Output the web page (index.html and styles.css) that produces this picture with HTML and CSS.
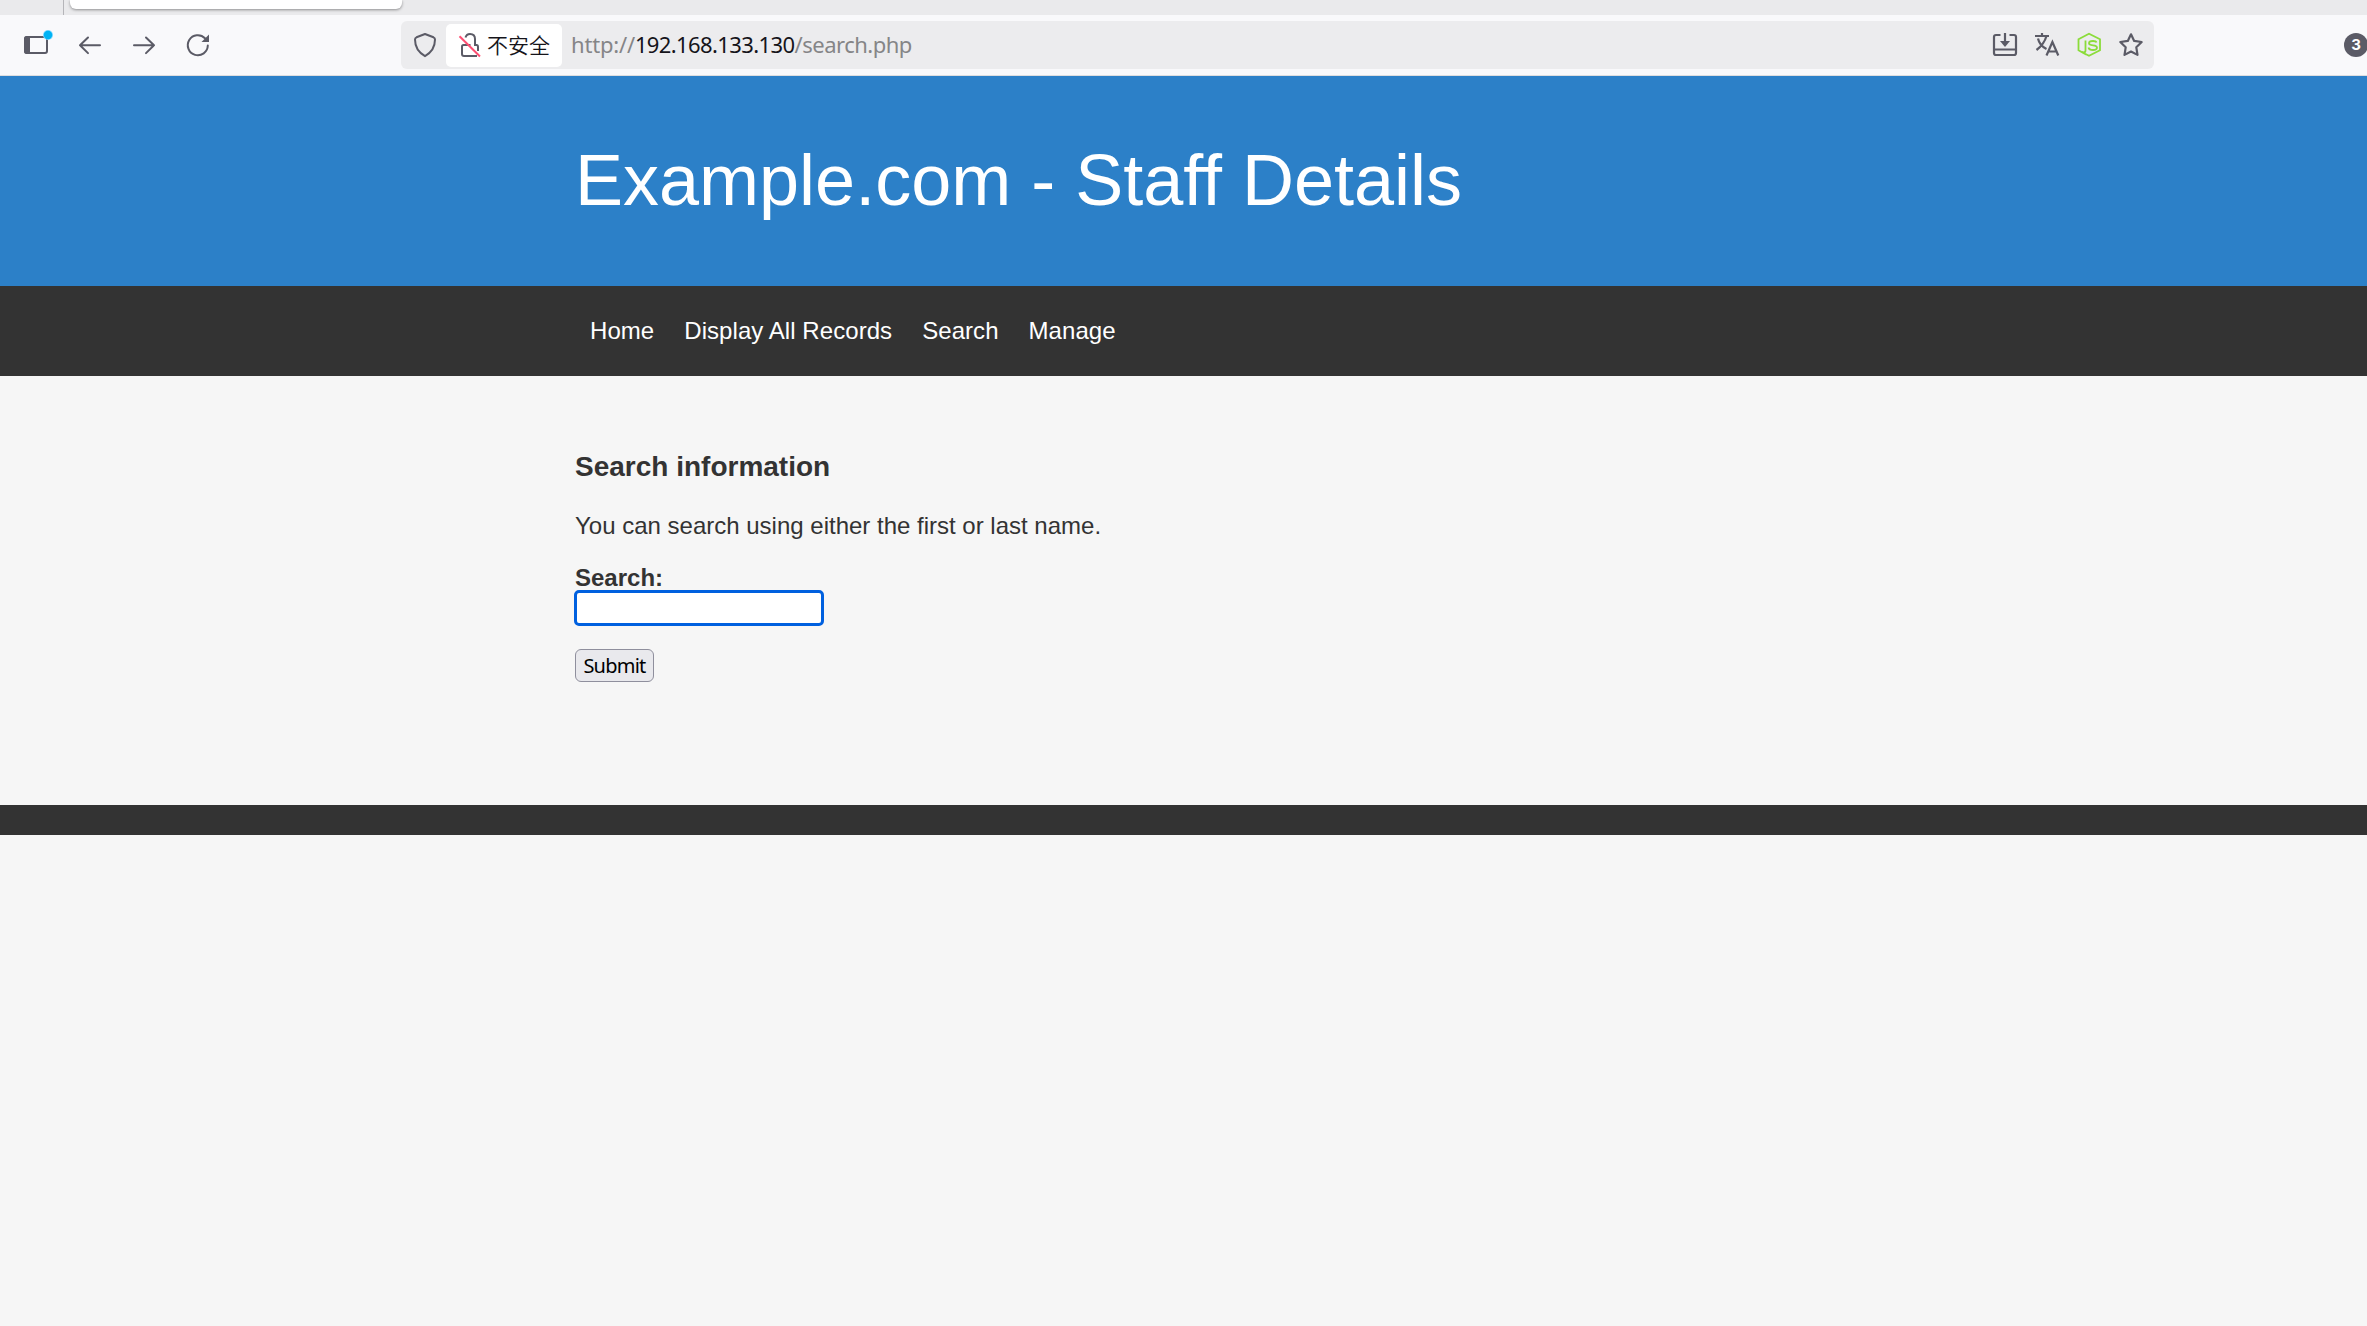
FILE: index.html
```html
<!DOCTYPE html>
<html lang="en">
<head>
<meta charset="utf-8">
<title>Example.com - Staff Details</title>
<link rel="stylesheet" href="styles.css">
</head>
<body>
<div class="tabstrip"><div class="pinned"></div><div class="tab"></div></div>
<div class="toolbar">
  <svg class="nav-icons" width="220" height="61" viewBox="0 15 220 61" fill="none" stroke="#5b5b66" stroke-width="2" stroke-linecap="round" stroke-linejoin="round">
    <rect x="25" y="37" width="22" height="16" rx="2"/>
    <path d="M27 36h3v18h-3q-3 0-3-3V39q0-3 3-3z" fill="#5b5b66" stroke="none"/>
    <circle cx="48" cy="35" r="5" fill="#80d8ff" stroke="none"/>
    <circle cx="48" cy="35" r="4.2" fill="#00b3f4" stroke="none"/>
    <path d="M100 45.3H80M88 37.5l-8 7.8 8 7.8M134 45.3h20M146 37.5l8 7.8-8 7.8"/>
    <path d="M205 38.3A10 10 0 1 0 207.8 45.5"/>
    <path d="M209 34.5v7.5h-7.5z" fill="#5b5b66" stroke="none"/>
  </svg>
  <div class="urlbar">
    <svg class="shield" width="24" height="26" viewBox="0 0 24 26" fill="none" stroke="#5b5b66" stroke-width="2" stroke-linejoin="round"><path d="M12 2L20.5 5.3Q22 6 22 7.6C22 15 18.5 20.5 12 24.2C5.500 20.5 2 15 2 7.600Q2 6 3.500 5.300z"/></svg>
    <div class="identity">
      <svg width="24" height="28" viewBox="458 31 24 28" fill="none" stroke="#5b5b66" stroke-width="2"><path d="M465.500 37.500Q466.500 34 470 34Q475 34 475 39V45H476.500Q478 45 478 47V51M470.500 45H463.500Q462 45 462 46.500V54Q462 56 464 56H477"/><path d="M459.500 36.200L480 56.500" stroke="#ff4f73"/></svg>
      <span>不安全</span>
    </div>
    <div class="url"><span class="scheme">http://</span><span class="host">192.168.133.130</span><span class="path">/search.php</span></div>
    <svg class="actions" width="160" height="30" viewBox="1990 30 160 30" fill="none" stroke="#5b5b66" stroke-width="2.200">
      <path d="M2000.500 35H1996q-2 0-2 2V53q0 2 2 2h18q2 0 2-2V37q0-2-2-2h-4.500M1994 49.500h22M2005 33v10"/>
      <path d="M2000 41h10l-5 6z" fill="#5b5b66" stroke="none"/>
      <path d="M2035 36h14M2042 33v3M2046.500 36Q2044 44.500 2036.500 50M2038 38.500Q2039.500 45.500 2046.500 49"/>
      <path d="M2046.500 55.500L2052.400 42L2058.300 55.500M2048.500 51.500h8"/>
      <g stroke="#8bdc3a" stroke-width="1.800"><path d="M2086 54.500L2078.500 50.200V39.200L2089 33.800L2100 39.200V50.200L2089 55.800L2085.500 54"/><path d="M2085.500 40.500V50.500Q2085.500 52.500 2083.500 52.500L2082 51.800M2096.500 42.500Q2096 41 2093 41Q2089 41 2089 43.300Q2089 45 2093 45.300Q2097 45.600 2097 47.500Q2097 50 2093 50Q2089 50 2088.500 47.500"/></g>
      <path stroke-linejoin="round" d="M2131 34.300L2134.200 40.900L2141.700 42L2136.300 47.300L2137.500 54.900L2131 51.500L2124.500 54.900L2125.700 47.300L2120.300 42L2127.800 40.900z"/>
    </svg>
  </div>
  <div class="counter">3</div>
</div>
<header class="banner"><h1>Example.com - Staff Details</h1></header>
<nav class="menu"><a>Home</a><a>Display All Records</a><a>Search</a><a>Manage</a></nav>
<main class="content">
  <h3>Search information</h3>
  <p>You can search using either the first or last name.</p>
  <label for="q">Search:</label>
  <input id="q" type="text">
  <button type="submit">Submit</button>
</main>
<footer class="footer"></footer>
</body>
</html>
```
FILE: styles.css
```css
* { box-sizing: border-box; }
body { margin: 0; background: #f6f6f6; color: #333; font: 24px/30px "Liberation Sans", Arial, sans-serif; overflow: hidden; }
svg { display: block; flex: none; }
.tabstrip { display: flex; height: 15px; background: #eaeaec; overflow: hidden; }
.pinned { width: 64px; border-right: 1px solid #b5b5b9; }
.tab { width: 332px; height: 9px; margin-left: 6px; background: #fff; border-radius: 0 0 6px 6px; box-shadow: 0 1px 3px rgba(0,0,0,.4); }
.toolbar { display: flex; height: 61px; background: #f9f9fb; border-bottom: 1px solid #dedee0; overflow: hidden; }
.urlbar { display: flex; align-items: center; width: 1753px; height: 48px; margin: 6px 0 0 181px; background: #ececee; border-radius: 6px; flex: none; }
.shield { margin-left: 12px; }
.identity { display: flex; align-items: center; width: 116px; height: 43px; margin-left: 9px; padding-left: 12px; gap: 5px; background: #fff; border-radius: 5px; color: #15141a; font: 21px/30px "Noto Sans CJK SC", sans-serif; font-weight: 350; white-space: nowrap; }
.identity span { padding-bottom: 2px; }
.url { margin-left: 9px; padding-bottom: 2px; font: 22px/30px "Noto Sans", sans-serif; color: #858587; white-space: nowrap; }
.scheme { letter-spacing: -.2px; }
.host { color: #15141a; letter-spacing: -.6px; }
.path { letter-spacing: -.5px; }
.actions { margin: 0 4px 0 auto; }
.counter { width: 24px; height: 24px; margin: 18px 0 0 190px; border-radius: 50%; background: #5b5b66; color: #fff; font: bold 15px/24px Inter, sans-serif; text-align: center; flex: none; }
.banner { height: 210px; padding: 59px 0 0 575px; background: #2c80c8; color: #fff; }
h1 { margin: 0; font-size: 72px; font-weight: 400; line-height: 90px; }
.menu { display: flex; gap: 30px; height: 90px; padding-left: 590px; background: #333; color: #fff; line-height: 90px; letter-spacing: .06px; }
.content { display: flex; flex-direction: column; align-items: flex-start; height: 429px; padding: 76px 0 0 575px; }
h3 { margin: 0 0 29px; font-size: 28px; line-height: 30px; }
p { margin: 0 0 22px; }
label { font-weight: 700; line-height: 30px; margin-bottom: -3px; }
input { width: 250px; height: 36px; margin: 0 0 23px -1px; border: 3px solid #0060df; border-radius: 5px; background: #fff; outline: none; }
button { width: 79px; height: 33px; padding: 0; border: 1px solid #8f8f9d; border-radius: 6px; background: #e9e9ed; color: #000; font: 20px/30px "Noto Sans", sans-serif; letter-spacing: -.75px; }
.footer { height: 30px; background: #333; }
```
